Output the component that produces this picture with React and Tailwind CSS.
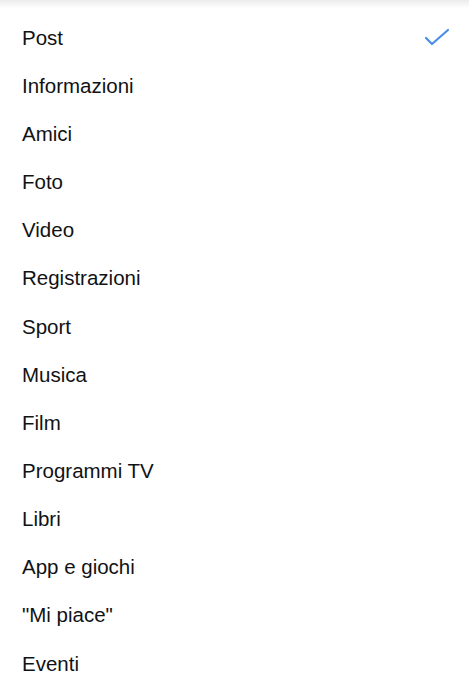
const items = [
  "Post",
  "Informazioni",
  "Amici",
  "Foto",
  "Video",
  "Registrazioni",
  "Sport",
  "Musica",
  "Film",
  "Programmi TV",
  "Libri",
  "App e giochi",
  "\"Mi piace\"",
  "Eventi",
];

export default function App() {
  return (
    <div className="w-[469px] h-[696px] overflow-hidden bg-white font-['Liberation_Sans',Arial,sans-serif] text-[#111214]">
      <div className="h-[8px] bg-gradient-to-b from-[#ebebeb] to-white" />
      <ul className="pt-[6px]">
        {items.map((item, i) => (
          <li
            key={item}
            className="h-[48.15px] flex items-center justify-between pl-[22px] pr-[19px] text-[20.5px]"
          >
            <span>{item}</span>
            {i === 0 && (
              <svg width="26" height="20" viewBox="0 0 26 20" fill="none">
                <path
                  d="M2 10 L8 16 L24 2"
                  stroke="#4a8fe7"
                  strokeWidth="2.2"
                  strokeLinecap="round"
                  strokeLinejoin="round"
                />
              </svg>
            )}
          </li>
        ))}
      </ul>
    </div>
  );
}
